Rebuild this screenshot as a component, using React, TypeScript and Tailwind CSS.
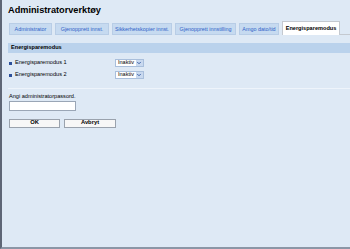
import { ChevronDown } from "lucide-react"

const tabs = [
  { label: "Administrator", w: "w-[43px]" },
  { label: "Gjenopprett innst.", w: "w-[54px]" },
  { label: "Sikkerhetskopier innst.", w: "w-[60px]" },
  { label: "Gjenopprett innstilling", w: "w-[61px]" },
  { label: "Amgo dato/tid", w: "w-[40px]" },
]

function ModeSelect() {
  return (
    <div className="flex h-[8px] items-center border border-[#a9bfdc] bg-white">
      <span className="px-[2px] text-[5.5px] leading-none text-black">Inaktiv</span>
      <span className="flex h-full w-[7px] items-center justify-center bg-[#c9d9ef]">
        <ChevronDown className="h-[6px] w-[6px] text-[#3d63a8]" strokeWidth={4} />
      </span>
    </div>
  )
}

export default function App() {
  return (
    <div
      className="h-[249px] w-[350px] overflow-hidden border-b-2 border-l-2 border-b-[#8b96a6] border-l-[#5e6676] bg-[#dee9f5] text-black"
      style={{ fontFamily: '"Liberation Sans", Arial, sans-serif' }}
    >
      <div className="pl-[6px] pt-[6px] text-[9.2px] font-bold leading-none">Administratorverktøy</div>

      {/* faner */}
      <div className="mt-[6px] flex items-end pl-[7px]">
        <div className="flex gap-[3px]">
          {tabs.map((t) => (
            <div
              key={t.label}
              className={`${t.w} flex h-[12px] items-center justify-center border border-[#b8cde6] bg-[#c6daf0] text-[5.4px] leading-none text-[#2f62c8]`}
            >
              {t.label}
            </div>
          ))}
        </div>
        <div className="ml-[3px] flex h-[14px] w-[58px] items-center justify-center border border-b-0 border-[#c4c9d0] bg-white text-[5.6px] font-bold leading-none">
          Energisparemodus
        </div>
        <div className="h-[1px] flex-1 bg-[#c4c9d0]" />
      </div>

      <div className="pl-[6px] pt-[8px]">
        <div className="flex h-[10px] items-center bg-[#bad2ec] pl-[3px] text-[5.6px] font-bold leading-none">
          Energisparemodus
        </div>

        <div className="mt-[6px] flex flex-col gap-[4px]">
          {["Energisparemodus 1", "Energisparemodus 2"].map((l) => (
            <div key={l} className="flex h-[8px] items-center">
              <span className="ml-[1px] h-[3px] w-[3px] bg-[#2b4f9a]" />
              <span className="ml-[3px] w-[100px] text-[5.6px] leading-none">{l}</span>
              <ModeSelect />
            </div>
          ))}
        </div>

        <div className="mt-[9px] h-[1px] bg-[#eef4fb]" />

        <div className="mt-[5px] pl-[1px] text-[5.6px] leading-none">Angi administratorpassord.</div>
        <div className="ml-[1px] mt-[1px] h-[10px] w-[67px] border border-[#9aa6b6] bg-white" />

        <div className="mt-[8px] flex gap-[4px] pl-[1px]">
          <button className="h-[9px] w-[51px] border border-[#9aa2ad] bg-[#f7f7f7] text-[5.8px] font-bold leading-none">
            OK
          </button>
          <button className="h-[9px] w-[52px] border border-[#9aa2ad] bg-[#f7f7f7] text-[5.8px] font-bold leading-none">
            Avbryt
          </button>
        </div>
      </div>
    </div>
  )
}
